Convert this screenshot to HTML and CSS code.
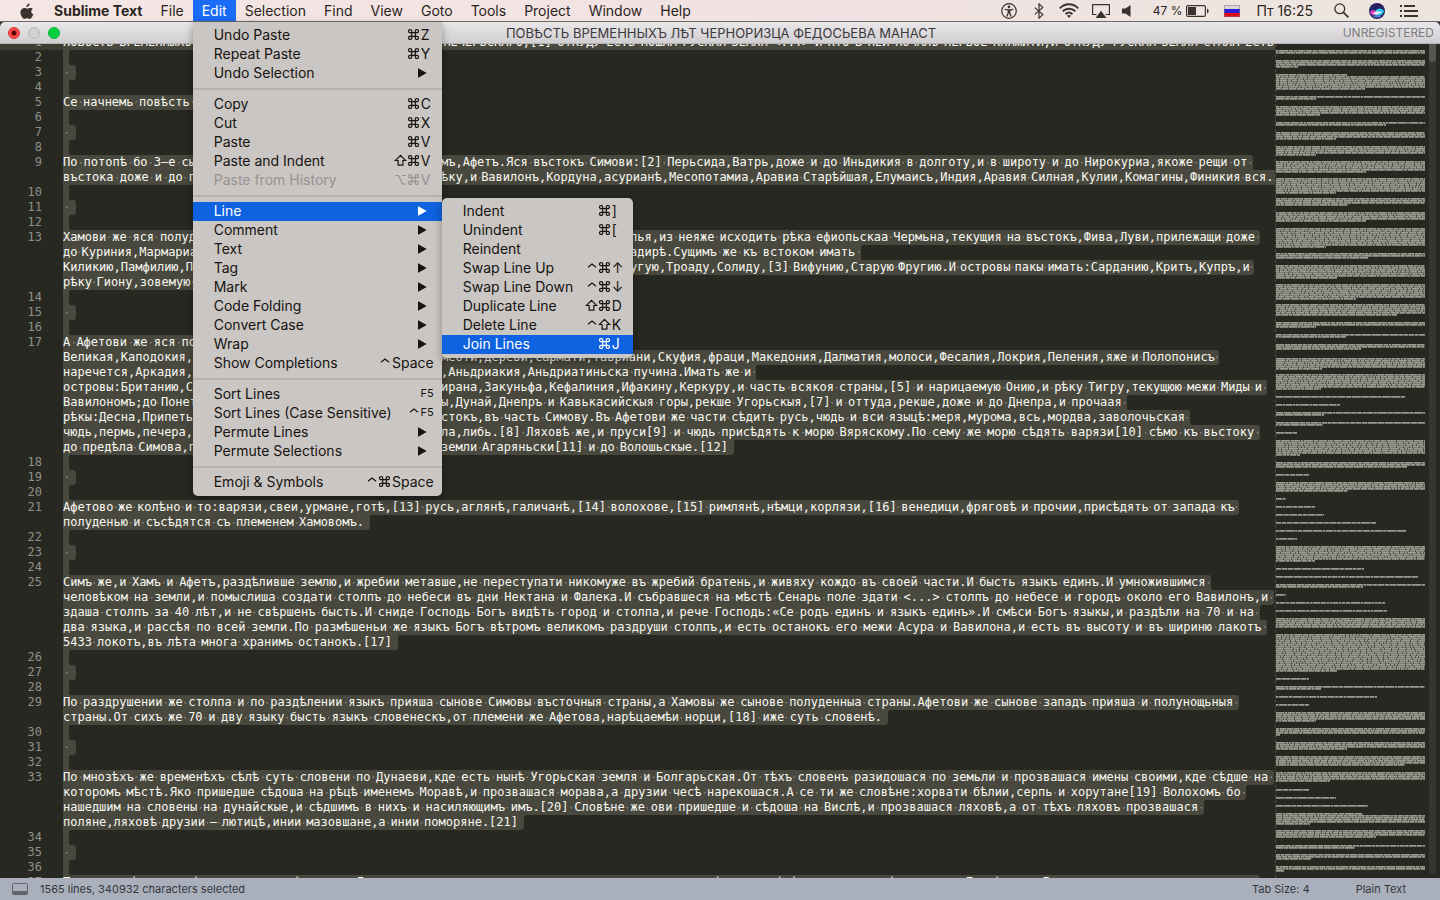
FILE: index.html
```html
<!DOCTYPE html>
<html lang="en">
<head>
<meta charset="utf-8">
<title>Sublime Text</title>
<link rel="stylesheet" href="styles.css">
</head>
<body>
<nav class="menubar" aria-label="Menu bar">
  <div class="menubar-left">
    <button class="apple" aria-label="Apple menu"><svg width="14" height="17" viewBox="0 0 14 17"><path fill="#3a322e" d="M9.6 0.4c.1 1-.3 1.900-.9 2.600-.6.7-1.500 1.200-2.300 1.100-.1-.9.3-1.900.9-2.500C7.900.9 8.900.4 9.600.4zM12.800 6c-.9.6-1.500 1.400-1.500 2.500 0 1.300.7 2.300 2 2.800-.3.9-.7 1.700-1.200 2.500-.7 1-1.400 2.100-2.500 2.100s-1.400-.6-2.600-.6-1.600.6-2.600.6c-1.100 0-1.900-1-2.600-2.100C.4 11.800-.1 8.900 1.100 7c.7-1.300 1.900-2 3.200-2 1.200 0 2 .7 3 .7s1.700-.7 3.100-.7c1 0 1.900.4 2.400 1z"/></svg></button>
    <button class="bar-item app">Sublime Text</button>
    <button class="bar-item">File</button>
    <div class="bar-menu">
      <button class="bar-item open" aria-expanded="true">Edit</button>
      <ul class="menu" id="edit-menu"></ul>
    </div>
    <button class="bar-item">Selection</button>
    <button class="bar-item">Find</button>
    <button class="bar-item">View</button>
    <button class="bar-item">Goto</button>
    <button class="bar-item">Tools</button>
    <button class="bar-item">Project</button>
    <button class="bar-item">Window</button>
    <button class="bar-item">Help</button>
  </div>
  <div class="menubar-right">
    <svg class="i-access" width="16" height="16" viewBox="0 0 16 16" fill="none" stroke="#3a322e"><circle cx="8" cy="8" r="7.300" stroke-width="1.200"/><circle cx="8" cy="3.900" r="1.300" fill="#3a322e" stroke="none"/><path d="M3.800 6.300l3 .6h2.400l3-.6M8 7v3M7.300 7v2.800L5.900 13.400M8.700 7v2.800l1.400 3.600" stroke-width="1.300"/></svg>
    <svg class="i-bt" width="10" height="16" viewBox="0 0 10 16" fill="none" stroke="#3a322e" stroke-width="1.200"><path d="M.8 4.600l8 7L5 15.200V.8l3.800 3.600-8 7"/></svg>
    <svg class="i-wifi" width="20" height="15" viewBox="0 0 20 15" fill="none" stroke="#3a322e" stroke-width="1.900"><path d="M.8 5.300C6-.1 14-.1 19.200 5.300M3.700 8.300c3.600-3.500 9-3.500 12.600 0M6.600 11.200c2-1.900 4.800-1.900 6.800 0"/><path fill="#3a322e" stroke="none" d="M10 15l-2-2.200c1.200-1 2.800-1 4 0z"/></svg>
    <svg class="i-air" width="18" height="14" viewBox="0 0 18 14"><path fill="none" stroke="#3a322e" stroke-width="1.200" d="M4.500 10.500H.6V.6h16.800v9.900h-3.900"/><path fill="#3a322e" d="M9 6.800l5.500 7.200h-11z"/></svg>
    <svg class="i-vol" width="9" height="12" viewBox="0 0 9 12"><path fill="#3a322e" d="M0 3.500h3.500L8.500 0v12L3.500 8.500H0z"/></svg>
    <span class="percent">47 %</span>
    <svg class="i-bat" width="23" height="12" viewBox="0 0 23 12"><rect x=".6" y=".6" width="18.800" height="10.800" rx="1.500" fill="none" stroke="#3a322e" stroke-width="1.200"/><path fill="#3a322e" d="M2 2h8v8H2zM21 3.500c2.200.8 2.200 4.200 0 5z"/></svg>
    <svg class="i-flag" width="16" height="12" viewBox="0 0 16 12"><path fill="#dcd8d8" d="M0 0h16v4H0z"/><path fill="#2a1fd0" d="M0 4h16v4H0z"/><path fill="#e30d17" d="M0 8h16v4H0z"/><path fill="none" stroke="#7a6a80" stroke-opacity=".5" d="M.5.5h15v11H.5z"/></svg>
    <span class="clock">Пт 16:25</span>
    <svg class="i-search" width="15" height="15" viewBox="0 0 15 15" fill="none" stroke="#3a322e"><circle cx="5.800" cy="5.800" r="4.900" stroke-width="1.300"/><path d="M9.400 9.400l5 5" stroke-width="1.800"/></svg>
    <svg class="i-siri" width="16" height="16" viewBox="0 0 16 16"><defs><linearGradient id="siri" x1="0" y1="0" x2="0" y2="1"><stop offset="0" stop-color="#3a1458"/><stop offset=".45" stop-color="#182a66"/><stop offset="1" stop-color="#2a1f50"/></linearGradient></defs><circle cx="8" cy="8" r="8" fill="url(#siri)"/><path fill="#e23ac0" d="M1 9.400c1.500-3 4-3 6.500-.4-1 3-4.600 4.600-6.500.4z"/><path fill="#30c8e8" d="M6.500 7.500c3-3 6.500-2.600 8.500.4-.6 3.600-4.600 5.800-8 3.600z"/><path fill="#f4f0ff" d="M4 10.300c2.500-2 6-2.200 9-.8-2.500.2-3.500 2-6 2.200-1.400 0-2.600-.4-3-1.400z"/><path fill="#5a7fe0" d="M3.500 13c3-1.500 6-1.500 9 0-2.500 2-6.500 2-9 0z"/></svg>
    <svg class="i-list" width="18" height="12" viewBox="0 0 18 12" fill="#3a322e"><path d="M0 0h2v2H0zM0 5h2v2H0zM0 10h2v2H0zM4 0h11v2H4zM4 5h14v2H4zM4 10h14v2H4z"/></svg>
  </div>
</nav>

<header class="titlebar">
  <div class="lights">
    <button class="light close" aria-label="Close"></button>
    <button class="light minimise" aria-label="Minimise"></button>
    <button class="light full" aria-label="Full screen"></button>
  </div>
  <h1>ПОВѢСТЬ ВРЕМЕННЫХЪ ЛѢТ ЧЕРНОРИЗЦА ФЕДОСЬЕВА МАНАСТ</h1>
  <span class="licence">UNREGISTERED</span>
</header>

<main class="editor">
  <div class="lines" id="lines"></div>
  <svg class="minimap" id="minimap" aria-hidden="true"></svg>
  <div class="scroll"><div class="thumb"></div></div>
</main>

<footer class="status">
  <svg width="16" height="12" viewBox="0 0 16 12"><rect x=".5" y=".5" width="15" height="11" rx="1" fill="none" stroke="#62656e"/><path fill="#62656e" d="M1 8h14v3H1z"/></svg>
  <span class="selected">1565 lines, 340932 characters selected</span>
  <button class="tab-size">Tab Size: 4</button>
  <button class="syntax">Plain Text</button>
</footer>
<script src="app.js"></script>
</body>
</html>
```

FILE: styles.css
```css
* { box-sizing: border-box; }
body {
  margin: 0;
  height: 100vh;
  display: flex;
  flex-direction: column;
  overflow: hidden;
  background: #272822;
  font-family: Inter, "Noto Sans", sans-serif;
  color: #161311;
}
button {
  border: 0;
  padding: 0;
  margin: 0;
  background: none;
  font: inherit;
  color: inherit;
  text-align: left;
  white-space: nowrap;
}
ul { list-style: none; margin: 0; padding: 0; }
svg { display: block; flex: none; }

.menubar {
  flex: none;
  height: 22px;
  display: flex;
  justify-content: space-between;
  background: linear-gradient(90deg, #f3e6e4, #f0e2e2 60%, #ece6de);
  border-bottom: 1px solid #6e6866;
  font-size: 14px;
  line-height: 21px;
  color: #2b2421;
  position: relative;
  z-index: 5;
}
.menubar-left { display: flex; padding-left: 20px; }
.menubar-right { display: flex; align-items: center; padding-right: 22px; }
.apple { width: 25px; padding-top: 2px; }
.bar-item { padding: 0 9px; height: 21px; }
.app { font-weight: 700; }
.bar-menu { position: relative; }
.open { background: #1a6bf5; color: #fff; }
.i-access { margin-right: 17px; }
.i-bt { margin-right: 15px; }
.i-wifi { margin-right: 13px; }
.i-air { margin-right: 12px; }
.i-vol { margin-right: 22px; }
.percent { font-size: 12px; margin-right: 4px; }
.i-bat { margin-right: 15px; }
.i-flag { margin-right: 16px; }
.clock { margin-right: 21px; }
.i-search { margin-right: 20px; }
.i-siri { margin-right: 15px; }

.menu {
  position: absolute;
  top: 22px;
  left: 0;
  width: 249px;
  padding: 4px 0;
  background: #cac6c3;
  border-radius: 0 0 5px 5px;
  box-shadow: 0 3px 8px rgba(0, 0, 0, .35);
  color: #161311;
  line-height: 17px;
}
.menu li { position: relative; }
.menu .menu {
  top: -4px;
  left: 100%;
  width: 191px;
  border-radius: 5px;
}
.entry {
  display: flex;
  align-items: flex-start;
  width: 100%;
  height: 19px;
  padding: 0 8px 0 21px;
}
.entry .label { flex: 1; }
.entry.chosen { background: #0f62e0; color: #fff; }
.entry.off { color: #979391; }
.mods { display: flex; }
.mods svg { width: 13px; height: 19px; }
.key { min-width: 14px; padding-left: 1px; }
.key.fn { font-size: 11px; }
.arrow {
  width: 9px;
  height: 10px;
  margin: 4px 7px 0 0;
  background: currentColor;
  clip-path: polygon(0 0, 100% 50%, 0 100%);
}
.sep { height: 12px; padding-top: 5px; }
.sep::before { content: ""; display: block; height: 2px; background: #b4b1ae; }

.titlebar {
  flex: none;
  height: 22px;
  display: grid;
  grid-template-columns: 1fr auto 1fr;
  align-items: center;
  padding: 0 6px 0 8px;
  background: linear-gradient(#e9e7e9, #d0ced0);
  border-bottom: 1px solid #b5b3b5;
  border-radius: 5px 5px 0 0;
  font-size: 13px;
  line-height: 20px;
  position: relative;
}
.lights { display: flex; gap: 8px; }
.light { width: 12px; height: 12px; border-radius: 50%; border: 1px solid; }
.close { background: radial-gradient(circle, #5c0003 2px, #fb4948 3px); border-color: #de3534; }
.minimise { background: #d3d1d3; border-color: #b9b7b9; }
.full { background: #06d040; border-color: #05b838; }
.titlebar h1 { margin: 0; font-size: 13px; font-weight: 400; color: #3b393b; }
.licence { justify-self: end; color: #7f7d7f; font-size: 12px; }

.editor { flex: 1; min-height: 0; display: flex; overflow: hidden; }
.lines {
  flex: 1;
  min-width: 0;
  margin-top: -9px;
  overflow: hidden;
  font: 12px/15px "DejaVu Sans Mono", monospace;
  color: #f8f8f2;
}
.row { display: flex; height: 15px; }
.num {
  flex: none;
  width: 58px;
  margin-right: 5px;
  padding-right: 16px;
  text-align: right;
  color: #8f908a;
}
.current, .current .num { background: #3e3d32; }
.sel { flex: none; display: flex; background: #49483e; white-space: pre; height: 15px; }
.sel.nl { padding-right: 6px; }
.sel.out-top { border-top-right-radius: 3px; }
.sel.out-bottom { border-bottom-right-radius: 3px; }
.run { display: flex; flex: none; }
.run span { flex: none; }
.run .sp { flex: 1 1 0; width: 4px; min-width: 4px; background: radial-gradient(circle, #77766b 1px, transparent 1px) center / 3px 3px no-repeat; }
.rest { flex: 1; background-repeat: no-repeat; background-size: 3px 3px; }
.in-top { background-image: radial-gradient(circle at 100% 100%, transparent 3px, #49483e 3px); background-position: 0 0; }
.in-bottom { background-image: radial-gradient(circle at 100% 0, transparent 3px, #49483e 3px); background-position: 0 100%; }
.in-top.in-bottom {
  background-image: radial-gradient(circle at 100% 100%, transparent 3px, #49483e 3px), radial-gradient(circle at 100% 0, transparent 3px, #49483e 3px);
  background-position: 0 0, 0 100%;
}
.minimap { width: 150px; height: 100%; border-left: 1px dashed #4a4a42; }
.scroll { flex: none; width: 7px; margin: 0 4px 4px; background: #353630; border-radius: 0 0 3px 3px; }
.thumb { height: 18px; background: #555650; border-radius: 0 0 3px 3px; }

.status {
  flex: none;
  height: 22px;
  display: flex;
  align-items: center;
  padding: 0 34px 0 12px;
  background: #a9afbb;
  color: #35373c;
  font-size: 11px;
  line-height: 22px;
  position: relative;
}
.selected { flex: 1; margin-left: 12px; }
.tab-size { margin-right: 46px; }
```

FILE: app.js
```javascript
// Modifier symbols drawn on a 13 x 19 cell.
const symbols = {
  cmd: '<path d="M4.700 7.700h3.600v3.600h-3.600zM4.700 7.700H3.200A1.600 1.600 0 1 1 4.700 6.200zM8.300 7.700V6.200A1.600 1.600 0 1 1 9.800 7.700zM8.300 11.300H9.800A1.600 1.600 0 1 1 8.300 12.800zM4.700 11.300V12.800A1.600 1.600 0 1 1 3.200 11.300z"/>',
  shift: '<path d="M6.500 4.300L11.700 9.500H8.900v4.700H4.100V9.500H1.300z"/>',
  opt: '<path d="M1 5.500h3.500l4 8.500H12M8 5.500h4"/>',
  ctrl: '<path d="M3 9.300L7 6l4 3.300"/>'
};
const icon = n => `<svg viewBox="0 1 13 19" fill="none" stroke="currentColor" stroke-width="1.200">${symbols[n]}</svg>`;

const lineMenu = [
  ["Indent", "cmd", "]"], ["Unindent", "cmd", "["], ["Reindent"],
  ["Swap Line Up", "ctrl cmd", "↑"], ["Swap Line Down", "ctrl cmd", "↓"],
  ["Duplicate Line", "shift cmd", "D"], ["Delete Line", "ctrl shift", "K"],
  ["Join Lines", "cmd", "J", "chosen"]
];
const editMenu = [
  ["Undo Paste", "cmd", "Z"], ["Repeat Paste", "cmd", "Y"], ["Undo Selection", ">"], null,
  ["Copy", "cmd", "C"], ["Cut", "cmd", "X"], ["Paste", "cmd", "V"],
  ["Paste and Indent", "shift cmd", "V"], ["Paste from History", "opt cmd", "V", "off"], null,
  ["Line", ">", "", "chosen", lineMenu], ["Comment", ">"], ["Text", ">"], ["Tag", ">"], ["Mark", ">"],
  ["Code Folding", ">"], ["Convert Case", ">"], ["Wrap", ">"], ["Show Completions", "ctrl", "Space"], null,
  ["Sort Lines", "", "F5"], ["Sort Lines (Case Sensitive)", "ctrl", "F5"],
  ["Permute Lines", ">"], ["Permute Selections", ">"], null,
  ["Emoji &amp; Symbols", "ctrl cmd", "Space"]
];
function menuHtml(items) {
  return items.map(it => {
    if (!it) return '<li class="sep"></li>';
    const [label, mods, key, state, sub] = it;
    let tail = "";
    if (mods === ">") tail = '<span class="arrow"></span>';
    else if (key) tail = `<span class="mods">${mods.split(" ").filter(Boolean).map(icon).join("")}</span><span class="key${key === "F5" ? " fn" : ""}">${key}</span>`;
    return `<li><button class="entry ${state || ""}"${state === "off" ? " disabled" : ""}><span class="label">${label}</span>${tail}</button>${sub ? `<ul class="menu">${menuHtml(sub)}</ul>` : ""}</li>`;
  }).join("");
}
document.getElementById("edit-menu").innerHTML = menuHtml(editMenu);

// [line number, wrapped rows]; a row is a string, or [columns, head, tail] with the tail set flush to its last column.
const doc = [
  [1, ["ПОВѢСТЬ ВРЕМЕННЫХЪ ЛѢТ ЧЕРНОРИЗЦА ФЕДОСЬЕВА МАНАСТЫРЯ ПЕЧЕРЬСКАГО,[1] ОТКУДУ ЕСТЬ ПОШЛА РУСКАЯ ЗЕМЛЯ <...> И КТО В НЕЙ ПОЧАЛЪ ПЕРВОЕ КНЯЖИТИ,И ОТКУДУ РУСКАЯ ЗЕМЛЯ СТАЛА ЕСТЬ"]],
  [2, [""]], [3, [" "]], [4, [""]],
  [5, ["Се начнемь повѣсть сию."]],
  [6, [""]], [7, [" "]], [8, [""]],
  [9, [[170, "По потопѣ бо 3—е сы", "мъ,Афетъ.Яся въстокъ Симови:[2] Перьсида,Ватрь,доже и до Иньдикия в долготу,и в широту и до Нирокуриа,якоже рещи от "],
       [171, "въстока доже и до п", "ѣку,и Вавилонъ,Кордуна,асурианѣ,Месопотамиа,Аравиа Старѣйшая,Елумаисъ,Индия,Аравия Силная,Кулии,Комагины,Финикия вся."]]],
  [10, [""]], [11, [" "]], [12, [""]],
  [13, [[171, "Хамови же яся полуд", "пья,из неяже исходить рѣка ефиопьскаа Чермьна,текущия на въстокъ,Фива,Луви,прилежащи доже "],
        [114, "до Куриния,Мармариа", "адирѣ.Сущимъ же къ встоком имать "],
        [170, "Киликию,Памфилию,Пи", "угую,Троаду,Солиду,[3] Вифунию,Старую Фругию.И островы пакы имать:Сарданию,Критъ,Купръ,и "],
        "рѣку Гиону,зовемую Нилъ."]],
  [14, [""]], [15, [" "]], [16, [""]],
  [17, [[78, "А Афетови же яся по", ""],
        [163, "Великая,Каподокия,Ф", "меоти,дереви,сармати,тавриани,Скуфия,фраци,Македония,Далматия,молоси,Фесалия,Локрия,Пеления,яже и Полопонисъ "],
        [99, "наречется,Аркадия,И", ",Аньдриакия,Аньдриатиньска пучина.Имать же и "],
        [172, "островы:Британию,Си", "ирана,Закуньфа,Кефалиния,Ифакину,Керкуру,и часть всякоя страны,[5] и нарицаемую Онию,и рѣку Тигру,текущюю межи Миды и "],
        [152, "Вавилономъ;до Понет", "ы,Дунай,Днепръ и Кавькасийскыя горы,рекше Угорьскыя,[7] и оттуда,рекше,доже и до Днепра,и прочаая "],
        [161, "рѣкы:Десна,Припеть,", "стокъ,въ часть Симову.Въ Афетови же части сѣдить русь,чюдь и вси языцѣ:меря,мурома,всь,мордва,заволочьская "],
        [171, "чюдь,пермь,печера,я", "ла,либь.[8] Ляховѣ же,и пруси[9] и чюдь присѣдять к морю Вяряскому.По сему же морю сѣдять варязи[10] сѣмо къ вьстоку "],
        [95, "до предѣла Симова,п", "земли Агаряньски[11] и до Волошьскые.[12]"]]],
  [18, [""]], [19, [" "]], [20, [""]],
  [21, ["Афетово же колѣно и то:варязи,свеи,урмане,готѣ,[13] русь,аглянѣ,галичанѣ,[14] волохове,[15] римлянѣ,нѣмци,корлязи,[16] венедици,фряговѣ и прочии,присѣдять от запада къ ",
        "полуденью и съсѣдятся съ племенем Хамовомъ."]],
  [22, [""]], [23, [" "]], [24, [""]],
  [25, ["Симъ же,и Хамъ и Афетъ,раздѣливше землю,и жребии метавше,не переступати никомуже въ жребий братень,и живяху кождо въ своей части.И бысть языкъ единъ.И умножившимся ",
        "человѣком на земли,и помыслиша создати столпъ до небеси въ дни Нектана и Фалека.И събравшеся на мѣстѣ Сенарь поле здати <...> столпъ до небесе и городъ около его Вавилонъ,и ",
        "здаша столпъ за 40 лѣт,и не свѣршенъ бысть.И сниде Господь Богъ видѣть город и столпа,и рече Господь:«Се родъ единъ и языкъ единъ».И смѣси Богъ языкы,и раздѣли на 70 и на ",
        "два языка,и рассѣя по всей земли.По размѣшеньи же языкъ Богъ вѣтромъ великомъ раздруши столпъ,и есть останокъ его межи Асура и Вавилона,и есть въ высоту и въ шириню лакотъ ",
        "5433 локотъ,въ лѣта многа хранимъ останокъ.[17]"]],
  [26, [""]], [27, [" "]], [28, [""]],
  [29, ["По раздрушении же столпа и по раздѣлении языкъ прияша сынове Симовы въсточныя страны,а Хамовы же сынове полуденныа страны.Афетови же сынове западъ прияша и полунощьныя ",
        "страны.От сихъ же 70 и дву языку бысть языкъ словенескъ,от племени же Афетова,нарѣцаемѣи норци,[18] иже суть словенѣ."]],
  [30, [""]], [31, [" "]], [32, [""]],
  [33, ["По мнозѣхъ же временѣхъ сѣлѣ суть словени по Дунаеви,кде есть нынѣ Угорьская земля и Болгарьская.От тѣхъ словенъ разидошася по земьли и прозвашася имены своими,кде сѣдше на ",
        "которомъ мѣстѣ.Яко пришедше сѣдоша на рѣцѣ именемъ Моравѣ,и прозвашася морава,а друзии чесѣ нарекошася.А се ти же словѣне:хорвати бѣлии,серпь и хорутане[19] Волохомъ бо ",
        "нашедшим на словены на дунайскые,и сѣдшимъ в нихъ и насиляющимъ имъ.[20] Словѣне же ови пришедше и сѣдоша на Вислѣ,и прозвашася ляховѣ,а от тѣхъ ляховъ прозвашася ",
        "поляне,ляховѣ друзии — лютицѣ,инии мазовшане,а инии поморяне.[21]"]],
  [34, [""]], [35, [" "]], [36, [""]],
  [37, ["Такоже и тѣ же словѣне,пришедше,сѣдоша по Днепру и наркошася поляне,а друзии деревляне,зане сѣдоша в лѣсѣхъ,а друзии сѣдоша межи Припѣтью и Двиною и наркошася дреговичи,и "]]
];
const COL = 7;
const rows = [];
for (const [n, parts] of doc) {
  parts.forEach((p, i) => {
    const runs = Array.isArray(p)
      ? [[p[1], p[0] - p[2].length], [p[2], p[2].length]]
      : [[p, p.length]];
    rows.push({ n: i ? "" : n, runs, nl: i === parts.length - 1 && n !== 37 });
  });
}
const size = r => r.runs.reduce((sum, run) => sum + run[1], 0) + (r.nl ? 0.9 : 0);
const esc = s => s.replace(/</g, "&lt;").replace(/>/g, "&gt;");
// Words keep their own width; the spaces between them share what is left of the run.
const runHtml = ([text, cols]) => {
  const words = text.split(/( )/).filter(Boolean)
    .map(t => t === " " ? '<span class="sp"> </span>' : `<span>${esc(t)}</span>`).join("");
  return `<span class="run" style="min-width:${cols * COL}px">${words}</span>`;
};
// The head of a split row is laid out on its own columns, then a gap leads to the tail.
const headHtml = ([text, cols]) => `<span class="run" style="width:${cols * COL}px">${runHtml([text, text.length])}</span>`;
document.getElementById("lines").innerHTML = rows.map((r, i) => {
  const w = size(r);
  const up = i ? size(rows[i - 1]) : w;
  const down = i < rows.length - 1 ? size(rows[i + 1]) : w;
  const sel = (r.nl ? " nl" : "") + (up < w ? " out-top" : "") + (down < w ? " out-bottom" : "");
  const rest = (up > w ? " in-top" : "") + (down > w ? " in-bottom" : "");
  const body = r.runs.length > 1 ? headHtml(r.runs[0]) + runHtml(r.runs[1]) : runHtml(r.runs[0]);
  return `<div class="row${i ? "" : " current"}"><span class="num">${r.n}</span><span class="sel${sel}">${body}</span><span class="rest${rest}"></span></div>`;
}).join("");

// Minimap blocks: [top, number of full rows, width of the last short row].
const blocks = [
  [50, 2, 0], [60, 3, 22], [74, 0, 71], [76, 6, 89], [96, 1, 40], [106, 4, 44], [122, 1, 110], [132, 3, 60],
  [146, 4, 40], [161, 5, 90], [178, 7, 60], [198, 3, 72], [212, 4, 90], [228, 9, 50], [253, 2, 92], [265, 6, 61],
  [284, 7, 80], [304, 5, 121], [322, 2, 40], [334, 1, 70], [344, 2, 85], [358, 5, 46], [374, 7, 45], [396, 0, 129],
  [404, 0, 64], [412, 1, 48], [422, 1, 47], [432, 0, 21], [440, 7, 24], [462, 2, 131], [474, 0, 33], [482, 4, 72],
  [498, 0, 10], [506, 0, 39], [514, 0, 48], [522, 0, 100], [530, 0, 130], [538, 0, 21], [546, 7, 39], [568, 0, 88],
  [576, 0, 142], [584, 1, 87], [594, 0, 10], [602, 0, 109], [610, 0, 111], [618, 5, 0], [634, 18, 61], [678, 0, 33],
  [686, 1, 45], [696, 0, 101], [704, 0, 33], [712, 4, 40], [728, 3, 4], [742, 3, 71], [756, 4, 129], [772, 4, 54],
  [789, 0, 33], [797, 0, 60], [805, 0, 92], [813, 0, 87], [815, 4, 34], [830, 3, 100], [845, 1, 79], [854, 2, 35], [866, 2, 8]
];
let seed = 7;
const rnd = () => (seed = (seed * 16807) % 2147483647) / 2147483647;
let base = "", strong = "", soft = "";
function mapRow(y, width) {
  let x = 0;
  base += `M0 ${y}h${width}v2h${-width}z`;
  while (x < width) {
    const w = Math.min(width - x, 2 + Math.floor(rnd() * 8));
    strong += `M${x} ${y}h${w}v1h${-w}z`;
    soft += `M${x} ${y + 1}h${w}v1h${-w}z`;
    x += w + 1;
  }
}
for (const [top, full, last] of blocks) {
  for (let i = 0; i < full; i++) mapRow(top - 44 + i * 2, 149);
  if (last) mapRow(top - 44 + full * 2, last);
}
document.getElementById("minimap").innerHTML = `<path fill="#55554c" d="${base}"/><path fill="#9c9b90" d="${strong}"/><path fill="#7c7b71" d="${soft}"/>`;
```
